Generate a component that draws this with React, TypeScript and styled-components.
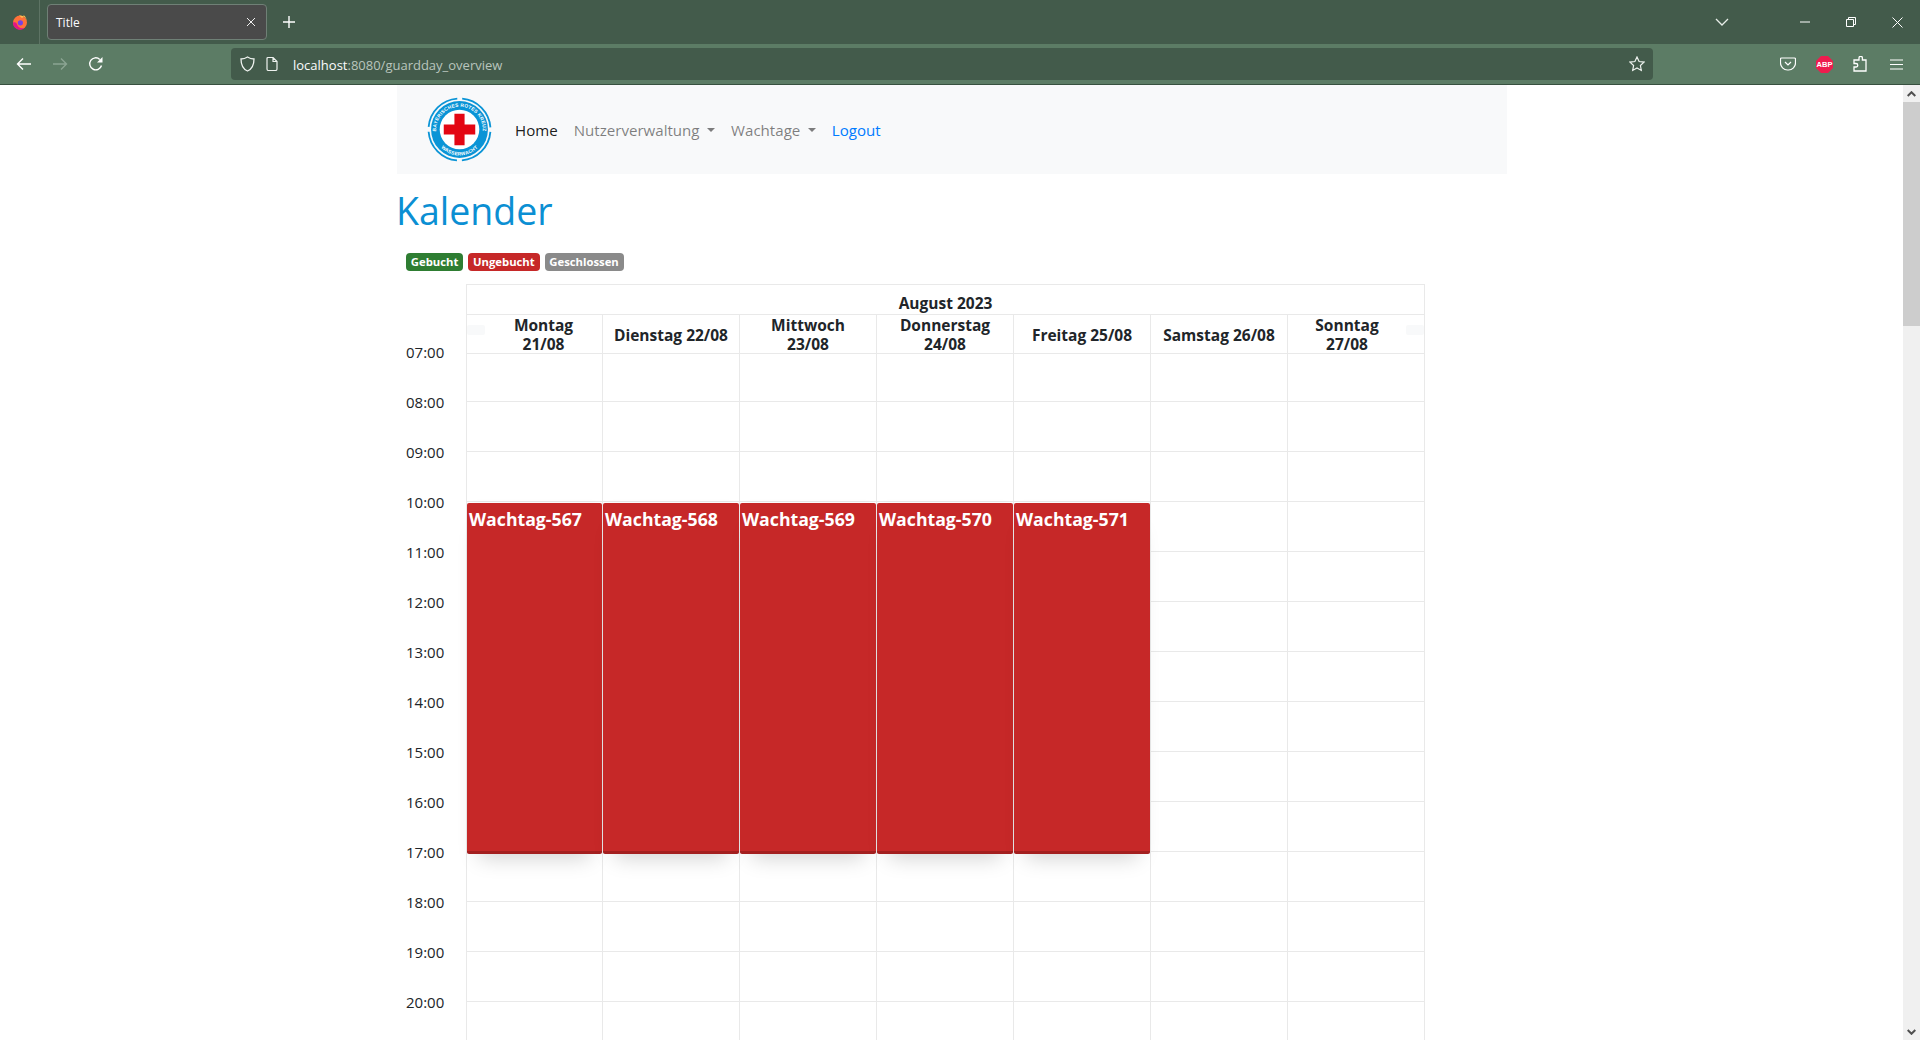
import styled, { createGlobalStyle } from "styled-components";

const GlobalStyle = createGlobalStyle`
  html, body {
    margin: 0;
    height: 100%;
    overflow: hidden;
    background: #fff;
    font-family: "Open Sans", "Noto Sans", sans-serif;
    color: #212529;
  }
`;

const HOURS = ["07:00","08:00","09:00","10:00","11:00","12:00","13:00","14:00","15:00","16:00","17:00","18:00","19:00","20:00"];
const DAYS = ["Montag 21/08","Dienstag 22/08","Mittwoch 23/08","Donnerstag 24/08","Freitag 25/08","Samstag 26/08","Sonntag 27/08"];
const EVENTS = ["Wachtag-567","Wachtag-568","Wachtag-569","Wachtag-570","Wachtag-571"];
const COLUMNS = [1, 2, 3, 4, 5, 6, 7];

const App = () => {
  return (
    <>
      <GlobalStyle />
      <Window>
        <TabBar>
          <AppIcon>
            <svg width="16" height="16" viewBox="0 0 16 16">
              <circle cx="8" cy="8.6" r="7" fill="#ff7139" />
              <path d="M7 1.500c4-.6 8 2.600 8 7.100 0-3-1-5.600-3.400-7.600.3 1.700-.6 2.600-1.600 3z" fill="#ffbd4f" />
              <path d="M1 8.600a7 7 0 0 0 12 5c-3 1.400-7 .4-8-3.400-.4-1.400-2-2.600-4-1.600z" fill="#e31587" />
              <circle cx="8.400" cy="8.800" r="2.600" fill="#7542e5" />
            </svg>
          </AppIcon>
          <Tab>
            <TabTitle>Title</TabTitle>
            <svg width="10" height="10" viewBox="0 0 10 10" stroke="#f0f0f0" fill="none">
              <path d="M1 1l8 8M9 1l-8 8" />
            </svg>
          </Tab>
          <NewTab>
            <svg width="14" height="14" viewBox="0 0 14 14" stroke="#fff" strokeWidth="1.4" fill="none">
              <path d="M7 1v12M1 7h12" />
            </svg>
          </NewTab>
          <TabSpacer />
          <WindowButton $width={46}>
            <svg width="14" height="8" viewBox="0 0 14 8" stroke="#e8eee9" strokeWidth="1.3" fill="none">
              <path d="M1 1l6 6 6-6" />
            </svg>
          </WindowButton>
          <WindowGap />
          <WindowButton $width={46}>
            <svg width="10" height="2" viewBox="0 0 10 2" stroke="#fff">
              <path d="M0 1h10" />
            </svg>
          </WindowButton>
          <WindowButton $width={46}>
            <svg width="10" height="10" viewBox="0 0 10 10" stroke="#fff" fill="none">
              <path d="M.5 2.500h7v7h-7zM2.500 2.500v-2h7v7h-2" />
            </svg>
          </WindowButton>
          <WindowButton $width={46}>
            <svg width="11" height="11" viewBox="0 0 11 11" stroke="#fff" fill="none">
              <path d="M.5.5l10 10M10.500.5l-10 10" />
            </svg>
          </WindowButton>
        </TabBar>

        <Toolbar>
          <ToolGroup>
            <ToolButton>
              <svg width="16" height="14" viewBox="0 0 16 14" stroke="#fff" strokeWidth="1.400" fill="none">
                <path d="M15 7H1.500M7 1.500 1.500 7 7 12.500" />
              </svg>
            </ToolButton>
            <ToolButton>
              <svg width="16" height="14" viewBox="0 0 16 14" stroke="#8ba492" strokeWidth="1.400" fill="none">
                <path d="M1 7h13.500M9 1.500 14.500 7 9 12.500" />
              </svg>
            </ToolButton>
            <ToolButton>
              <svg width="16" height="16" viewBox="0 0 16 16" fill="none">
                <path d="M13.500 9.500A6 6 0 1 1 11.800 3.400" stroke="#fff" strokeWidth="1.400" />
                <path d="M14.500 1v5.500H9z" fill="#fff" />
              </svg>
            </ToolButton>
          </ToolGroup>

          <AddressBar>
            <AddressIcon>
              <svg width="15" height="16" viewBox="0 0 15 16" stroke="#eef2ef" strokeWidth="1.300" fill="none">
                <path d="M7.500 1C9.500 2.400 11.500 3 14 3c0 6-1.800 10-6.500 12C2.800 13 1 9 1 3c2.500 0 4.500-.6 6.500-2z" />
              </svg>
            </AddressIcon>
            <AddressIcon>
              <svg width="12" height="14" viewBox="0 0 12 14" stroke="#eef2ef" strokeWidth="1.200" fill="none">
                <path d="M1 1.500a1 1 0 0 1 1-1h5l4 4v7.500a1.500 1.500 0 0 1-1.500 1.500h-7A1.500 1.500 0 0 1 1 12zM7 .5V4.500h4" />
              </svg>
            </AddressIcon>
            <AddressText>
              localhost<AddressMuted>:8080/guardday_overview</AddressMuted>
            </AddressText>
            <svg width="16" height="16" viewBox="0 0 16 16" stroke="#eef2ef" strokeWidth="1.200" fill="none">
              <path d="M8 1l2.100 4.500 4.900.6-3.600 3.400.9 4.900L8 12l-4.300 2.400.9-4.900L1 6.100l4.900-.6z" />
            </svg>
          </AddressBar>

          <ExtensionGroup>
            <ToolButton>
              <svg width="16" height="14" viewBox="0 0 16 14" stroke="#fff" strokeWidth="1.200" fill="none">
                <path d="M1.500 1h13a1 1 0 0 1 1 1v4a7 7 0 0 1-7 7h-1a7 7 0 0 1-7-7V2a1 1 0 0 1 1-1zM5 5l3 3 3-3" />
              </svg>
            </ToolButton>
            <ToolButton>
              <svg width="17" height="17" viewBox="0 0 17 17">
                <path d="M5 0h7l5 5v7l-5 5H5l-5-5V5z" fill="#ee1c4e" />
                <AbpText x="8.500" y="11.300">ABP</AbpText>
              </svg>
            </ToolButton>
            <ToolButton>
              <svg width="14" height="16" viewBox="0 0 14 16" stroke="#fff" strokeWidth="1.300" fill="none">
                <path d="M6 4V2a1.700 1.700 0 0 1 3.400 0v2H13v11H1v-4h2a1.500 1.500 0 0 0 0-3.500H1V4z" />
              </svg>
            </ToolButton>
            <ToolButton>
              <svg width="13" height="11" viewBox="0 0 13 11" stroke="#fff" strokeWidth="1.100">
                <path d="M0 1h13M0 5.500h13M0 10h13" />
              </svg>
            </ToolButton>
          </ExtensionGroup>
        </Toolbar>

        <Viewport>
          <Page>
            <Container>
              <Navbar>
                <Logo />
                <NavLink $tone="active">Home</NavLink>
                <NavLink>
                  Nutzerverwaltung<Caret />
                </NavLink>
                <NavLink>
                  Wachtage<Caret />
                </NavLink>
                <NavLink $tone="link">Logout</NavLink>
              </Navbar>

              <Heading>Kalender</Heading>

              <Legend>
                <Badge $bg="#2e7d32">Gebucht</Badge>
                <Badge $bg="#c62828">Ungebucht</Badge>
                <Badge $bg="#8a8a8a">Geschlossen</Badge>
              </Legend>

              <Calendar>
                <TimeAxis>
                  {HOURS.map((hour) => (
                    <TimeLabel key={hour}>{hour}</TimeLabel>
                  ))}
                </TimeAxis>

                <Grid>
                  <WeekTitle>August 2023</WeekTitle>

                  {DAYS.map((day, i) => (
                    <DayHead key={day} $col={i + 1}>
                      {i === 0 && <PagerStub />}
                      <DayName>{day}</DayName>
                      {i === 6 && <PagerStub />}
                    </DayHead>
                  ))}

                  {HOURS.map((hour, r) =>
                    COLUMNS.map((col) => (
                      <SlotCell key={hour + col} $col={col} $row={r + 3} />
                    ))
                  )}

                  {EVENTS.map((event, i) => (
                    <EventBlock key={event} $col={i + 1}>
                      {event}
                    </EventBlock>
                  ))}
                </Grid>
              </Calendar>
            </Container>
          </Page>

          <Scrollbar>
            <ScrollArrow>
              <svg width="9" height="6" viewBox="0 0 9 6" stroke="#505050" strokeWidth="2" fill="none">
                <path d="M.7 5l3.800-3.800L8.300 5" />
              </svg>
            </ScrollArrow>
            <ScrollThumb />
            <ScrollTrack />
            <ScrollArrow>
              <svg width="9" height="6" viewBox="0 0 9 6" stroke="#505050" strokeWidth="2" fill="none">
                <path d="M.7 1l3.800 3.800L8.300 1" />
              </svg>
            </ScrollArrow>
          </Scrollbar>
        </Viewport>
      </Window>
    </>
  );
};

const Logo = () => {
  return (
    <LogoSvg viewBox="0 0 64 64">
      <defs>
        <path id="logo-top" d="M10.400 40.500a23 23 0 1 1 43.200 0" />
        <path id="logo-bottom" d="M6.500 32a25.500 25.500 0 0 0 51 0" />
      </defs>
      <circle cx="32" cy="32" r="30.500" fill="none" stroke="#0a94d6" strokeWidth="1.800" strokeDasharray="43 4.910" strokeDashoffset="-2.450" />
      <circle cx="32" cy="32" r="28" fill="#0a94d6" />
      <circle cx="32" cy="32" r="19.500" fill="#fff" />
      <path d="M27 16.500h10V27h10.500v10H37v10.500H27V37H16.500V27H27z" fill="#e30613" />
      <LogoText>
        <textPath href="#logo-top" startOffset="50%" textAnchor="middle">
          BAYERISCHES ROTES KREUZ
        </textPath>
      </LogoText>
      <LogoText>
        <textPath href="#logo-bottom" startOffset="50%" textAnchor="middle">
          WASSERWACHT
        </textPath>
      </LogoText>
    </LogoSvg>
  );
};

const Window = styled.div`
  display: flex;
  flex-direction: column;
  height: 100vh;
  overflow: hidden;
`;

const TabBar = styled.div`
  display: flex;
  align-items: center;
  height: 44px;
  flex: none;
  background: #435b4b;
`;

const AppIcon = styled.div`
  display: flex;
  align-items: center;
  justify-content: center;
  width: 39px;
  height: 44px;
  border-right: 1px solid #5d7364;
`;

const Tab = styled.div`
  display: flex;
  align-items: center;
  justify-content: space-between;
  box-sizing: border-box;
  width: 220px;
  height: 36px;
  margin-left: 7px;
  padding: 0 10px 0 8px;
  background: #4a4a4a;
  border: 1px solid #6f8076;
  border-radius: 4px;
`;

const TabTitle = styled.span`
  font-size: 12px;
  color: #fbfbfe;
`;

const NewTab = styled.div`
  display: flex;
  justify-content: center;
  width: 40px;
  margin-left: 2px;
`;

const TabSpacer = styled.div`
  flex: 1;
`;

const WindowGap = styled.div`
  width: 37px;
`;

const WindowButton = styled.div<{ $width: number }>`
  display: flex;
  align-items: center;
  justify-content: center;
  width: ${(props) => props.$width}px;
`;

const Toolbar = styled.div`
  display: flex;
  align-items: center;
  box-sizing: border-box;
  height: 41px;
  flex: none;
  background: #5c7c65;
  border-bottom: 1px solid #37503f;
`;

const ToolGroup = styled.div`
  display: flex;
  width: 231px;
  padding-left: 6px;
  box-sizing: border-box;
`;

const ToolButton = styled.div`
  display: flex;
  align-items: center;
  justify-content: center;
  width: 36px;
  height: 32px;
`;

const AddressBar = styled.div`
  display: flex;
  align-items: center;
  box-sizing: border-box;
  width: 1422px;
  height: 32px;
  padding: 0 8px 0 0;
  background: #435b4b;
  border-radius: 4px;
`;

const AddressIcon = styled.div`
  display: flex;
  justify-content: center;
  width: 18px;

  &:first-child {
    width: 32px;
  }
`;

const AddressText = styled.div`
  flex: 1;
  margin: 1px 0 0 12px;
  font-size: 13px;
  color: #fbfbfe;
`;

const AddressMuted = styled.span`
  color: #b9c5bd;
`;

const ExtensionGroup = styled.div`
  display: flex;
  margin-left: 117px;
`;

const AbpText = styled.text`
  font-family: "Liberation Sans", sans-serif;
  font-size: 7.500px;
  font-weight: 700;
  fill: #fff;
  text-anchor: middle;
`;

const Viewport = styled.div`
  display: flex;
  flex: 1;
  min-height: 0;
`;

const Page = styled.div`
  flex: 1;
  min-width: 0;
  overflow: hidden;
`;

const Container = styled.div`
  box-sizing: border-box;
  width: 1110px;
  margin-left: 397px;
`;

const Navbar = styled.nav`
  display: flex;
  align-items: center;
  box-sizing: border-box;
  height: 89px;
  padding-left: 30px;
  background: #f8f9fa;
`;

const LogoSvg = styled.svg`
  width: 65px;
  height: 65px;
  margin-right: 15px;
`;

const LogoText = styled.text`
  font-family: "Liberation Sans", sans-serif;
  font-size: 4.800px;
  font-weight: 700;
  fill: #fff;
  letter-spacing: 0.2px;
`;

const toneColor = { active: "rgba(0, 0, 0, 0.9)", link: "#007bff", muted: "rgba(0, 0, 0, 0.5)" };

const NavLink = styled.a<{ $tone?: "active" | "link" }>`
  display: flex;
  align-items: center;
  padding: 0 8px;
  font-size: 15.100px;
  color: ${(props) => toneColor[props.$tone || "muted"]};
`;

const Caret = styled.span`
  width: 0;
  height: 0;
  margin-left: 7.500px;
  border-top: 4.800px solid currentColor;
  border-left: 4.800px solid transparent;
  border-right: 4.800px solid transparent;
`;

const Heading = styled.h1`
  margin: 10px 0 0 -1px;
  font-size: 37.500px;
  font-weight: 400;
  line-height: 54px;
  color: #0b8fd3;
`;

const Legend = styled.div`
  display: flex;
  gap: 5px;
  margin: 15px 0 0 9px;
`;

const Badge = styled.span<{ $bg: string }>`
  padding: 0 4.800px;
  font-size: 11.300px;
  font-weight: 700;
  line-height: 18px;
  color: #fff;
  background: ${(props) => props.$bg};
  border-radius: 4px;
`;

const Calendar = styled.div`
  display: flex;
  margin: 13px 0 0 9px;
`;

const TimeAxis = styled.div`
  width: 60px;
  padding-top: 43px;
`;

const TimeLabel = styled.div`
  display: flex;
  align-items: center;
  height: 50px;
  font-size: 15px;
`;

const Grid = styled.div`
  display: grid;
  grid-template-columns: 136px repeat(6, 137px);
  grid-template-rows: 30px 39px 48px repeat(13, 50px);
  border-right: 1px solid #e9e9e9;
`;

const WeekTitle = styled.div`
  grid-column: 1 / -1;
  grid-row: 1;
  padding-top: 7px;
  font-size: 15.500px;
  font-weight: 700;
  line-height: 22px;
  text-align: center;
  border-top: 1px solid #e9e9e9;
  border-left: 1px solid #e9e9e9;
`;

const DayHead = styled.div<{ $col: number }>`
  grid-column: ${(props) => props.$col};
  grid-row: 2;
  display: flex;
  align-items: center;
  border-top: 1px solid #e9e9e9;
  border-left: 1px solid #e9e9e9;
`;

const DayName = styled.div`
  flex: 1;
  padding: 2px 10px 0;
  font-size: 15.500px;
  font-weight: 700;
  line-height: 19px;
  text-align: center;
`;

const PagerStub = styled.div`
  flex: none;
  align-self: flex-start;
  width: 18px;
  height: 10px;
  margin-top: 10px;
  background: #f8f9fa;
  border-radius: 2px;
`;

const SlotCell = styled.div<{ $col: number; $row: number }>`
  grid-column: ${(props) => props.$col};
  grid-row: ${(props) => props.$row};
  border-top: 1px solid #e9e9e9;
  border-left: 1px solid #e9e9e9;
`;

const EventBlock = styled.div<{ $col: number }>`
  grid-column: ${(props) => props.$col};
  grid-row: 6 / span 7;
  z-index: 1;
  margin: 2px 0 -3px 1px;
  padding: 4px 0 0 2px;
  font-size: 17.700px;
  font-weight: 700;
  line-height: 24px;
  color: #fff;
  background: #c62828;
  border-bottom: 3px solid #a31f1f;
  border-radius: 2px;
  box-shadow: 0 16px 20px -12px rgba(0, 0, 0, 0.18), 0 -5px 6px -6px rgba(0, 0, 0, 0.06);
`;

const Scrollbar = styled.div`
  display: flex;
  flex-direction: column;
  flex: none;
  width: 17px;
  background: #f0f0f0;
`;

const ScrollArrow = styled.div`
  display: flex;
  align-items: center;
  justify-content: center;
  height: 17px;
  flex: none;
`;

const ScrollThumb = styled.div`
  height: 224px;
  flex: none;
  background: #cdcdcd;
`;

const ScrollTrack = styled.div`
  flex: 1;
`;

export default App;
